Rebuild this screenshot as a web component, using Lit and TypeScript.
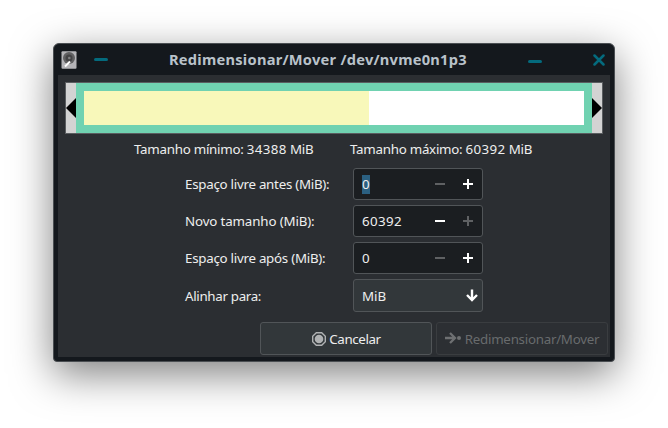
import { LitElement, html, css, svg } from "lit";
import { customElement, property } from "lit/decorators.js";

const minus = svg`<path d="M0 4h10v2h-10z" />`;
const plus = svg`<path d="M0 4h4v-4h2v4h4v2h-4v4h-2v-4h-4z" />`;

@customElement("spin-field")
class SpinField extends LitElement {
  @property() value = "0";
  @property({ type: Boolean }) selected = false;
  @property({ type: Boolean }) canDecrease = false;
  @property({ type: Boolean }) canIncrease = false;

  static styles = css`
    :host {
      display: flex;
      align-items: center;
      box-sizing: border-box;
      height: 32px;
      padding: 0 9px 0 8px;
      border: 1px solid #515558;
      border-radius: 3px;
      background: #1b1e21;
      color: #eeeeee;
    }
    .value {
      line-height: 19px;
      letter-spacing: 0.37px;
    }
    .selected {
      background: #2b6081;
    }
    .gap {
      flex: 1;
    }
    svg {
      width: 10px;
      height: 10px;
      fill: #5f6163;
    }
    svg.on {
      fill: #ffffff;
    }
    svg + svg {
      margin-left: 18px;
    }
  `;

  render() {
    return html`
      <span class="value ${this.selected ? "selected" : ""}">${this.value}</span>
      <span class="gap"></span>
      <svg class=${this.canDecrease ? "on" : ""} viewBox="0 0 10 10">${minus}</svg>
      <svg class=${this.canIncrease ? "on" : ""} viewBox="0 0 10 10">${plus}</svg>
    `;
  }
}

@customElement("app-root")
class AppRoot extends LitElement {
  static styles = css`
    :host {
      display: block;
      box-sizing: border-box;
      height: 428px;
      padding: 43px 53px 0;
      overflow: hidden;
      background: #ffffff;
      font: 13.33px/19px "Noto Sans", sans-serif;
      color: #eeeeee;
    }
    .window {
      box-sizing: border-box;
      width: 562px;
      height: 319px;
      display: flex;
      flex-direction: column;
      border: 1px solid #4a4e52;
      border-radius: 6px 6px 4px 4px;
      background: #14181d;
      padding: 0 4px 4px;
      box-shadow: 0 12px 40px rgba(0, 0, 0, 0.5);
    }
    .titlebar {
      height: 31px;
      flex: none;
      display: flex;
      align-items: center;
      padding: 0 5px 0 3px;
    }
    .disk {
      width: 16px;
      height: 18px;
    }
    .stick {
      width: 14px;
      height: 3px;
      border-radius: 1.5px;
      background: #046a7d;
      margin-left: 17px;
    }
    .title {
      margin: 0 0 1px 61px;
      width: 299px;
      font-size: 14.67px;
      font-weight: 700;
      letter-spacing: 0.24px;
      color: #b9c2ca;
      white-space: nowrap;
    }
    .minimize {
      margin: 4px 0 0 60px;
    }
    .close {
      width: 12px;
      height: 12px;
      margin-left: auto;
    }
    .body {
      flex: 1;
      background: #2b2e32;
      padding: 7px 2px 0 7px;
    }
    .bar {
      box-sizing: border-box;
      width: 538px;
      height: 52px;
      display: flex;
      border: 1px solid #5a5d60;
      background: #d3d3d3;
    }
    .handle {
      width: 10px;
      height: 50px;
    }
    .partition {
      flex: 1;
      display: flex;
      box-sizing: border-box;
      border: 8px solid #70d2b1;
      background: #ffffff;
    }
    .used {
      width: 285px;
      background: #f8f8ba;
    }
    .limits {
      display: flex;
      margin: 6px 0 9px 69px;
      letter-spacing: -0.26px;
    }
    .limits span {
      width: 216px;
    }
    .limits b {
      font-weight: 400;
      letter-spacing: 0.37px;
    }
    .form {
      display: grid;
      grid-template-columns: 168px 130px;
      row-gap: 5px;
      margin-left: 120px;
      align-items: center;
    }
    label {
      letter-spacing: -0.26px;
    }
    .size {
      letter-spacing: -0.14px;
    }
    .align {
      padding-top: 2px;
      letter-spacing: -0.32px;
    }
    .select {
      box-sizing: border-box;
      height: 33px;
      display: flex;
      align-items: center;
      justify-content: space-between;
      padding: 1px 4px 0 8px;
      border: 1px solid #515558;
      border-radius: 3px;
      background: #32373a;
    }
    .select svg {
      width: 12px;
      height: 13px;
      margin-top: -1px;
    }
    .actions {
      display: flex;
      justify-content: flex-end;
      gap: 4px;
      margin-top: 10px;
    }
    .button {
      box-sizing: border-box;
      width: 172px;
      height: 33px;
      display: flex;
      align-items: center;
      justify-content: center;
      gap: 3px;
      border: 1px solid #515558;
      border-radius: 3px;
      background: #32373a;
      letter-spacing: -0.26px;
      white-space: nowrap;
    }
    .button span {
      padding-top: 2px;
    }
    .cancel {
      padding-left: 1px;
      letter-spacing: -0.38px;
    }
    .disabled {
      background: #2c2f33;
      border-color: #3a3d40;
      color: #686b6d;
    }
    .stop {
      width: 14px;
      height: 14px;
    }
    .apply {
      width: 17px;
      height: 12px;
      margin-top: -2px;
    }
  `;

  render() {
    return html`
      <div class="window">
        <div class="titlebar">
          <svg class="disk" viewBox="0 0 16 18">
            <rect x="0.5" y="0.3" width="15" height="17.4" rx="1" fill="#b4b4b8" />
            <circle cx="8" cy="7" r="6" fill="#606062" />
            <circle cx="8" cy="7" r="3.5" fill="#434345" />
            <circle cx="8.3" cy="7" r="1.3" fill="#808082" />
            <path d="M4 15.5L9 10.5" stroke="#ffffff" stroke-width="2" />
          </svg>
          <span class="stick"></span>
          <span class="title">Redimensionar/Mover /dev/nvme0n1p3</span>
          <span class="stick minimize"></span>
          <svg class="close" viewBox="0 0 12 12">
            <path d="M1.5 1.5l9 9M10.5 1.5l-9 9" stroke="#046a7d" stroke-width="2.5" stroke-linecap="round" />
          </svg>
        </div>
        <div class="body">
          <div class="bar">
            <svg class="handle" viewBox="0 0 10 50"><path d="M0 25L10 15v20z" /></svg>
            <div class="partition"><div class="used"></div></div>
            <svg class="handle" viewBox="0 0 10 50"><path d="M10 25L0 15v20z" /></svg>
          </div>
          <div class="limits">
            <span>Tamanho mínimo: <b>34388</b> MiB</span>
            <span>Tamanho máximo: <b>60392</b> MiB</span>
          </div>
          <div class="form">
            <label>Espaço livre antes (MiB):</label>
            <spin-field value="0" selected .canIncrease=${true}></spin-field>
            <label class="size">Novo tamanho (MiB):</label>
            <spin-field value="60392" .canDecrease=${true}></spin-field>
            <label>Espaço livre após (MiB):</label>
            <spin-field value="0" .canIncrease=${true}></spin-field>
            <label class="align">Alinhar para:</label>
            <div class="select">
              <span>MiB</span>
              <svg viewBox="0 0 12 13" fill="none" stroke="#ffffff" stroke-width="2.4">
                <path d="M6 0.5v10.5M1 6l5 5 5-5" />
              </svg>
            </div>
          </div>
          <div class="actions">
            <div class="button cancel">
              <svg class="stop" viewBox="0 0 14 14">
                <path d="M4.3 0.7h5.4l3.6 3.6v5.4l-3.6 3.6h-5.4l-3.6-3.6v-5.4z" fill="none" stroke="#b0b2b3" stroke-width="1.4" />
                <circle cx="7" cy="7" r="4.3" fill="#b0b2b3" />
              </svg>
              <span>Cancelar</span>
            </div>
            <div class="button disabled">
              <svg class="apply" viewBox="0 0 17 12">
                <path d="M0 6h10M5 1l5 5-5 5" fill="none" stroke="#6e7072" stroke-width="2.3" />
                <circle cx="14" cy="6" r="2" fill="#6e7072" />
              </svg>
              <span>Redimensionar/Mover</span>
            </div>
          </div>
        </div>
      </div>
    `;
  }
}
